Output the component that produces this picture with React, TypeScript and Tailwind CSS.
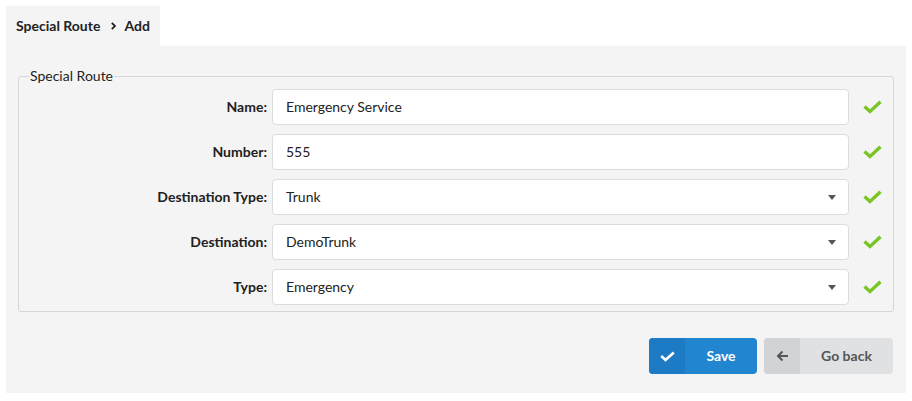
import React from 'react';

type Field = {
  label: string;
  value: string;
  select?: boolean;
};

const fields: Field[] = [
  { label: 'Name:', value: 'Emergency Service' },
  { label: 'Number:', value: '555' },
  { label: 'Destination Type:', value: 'Trunk', select: true },
  { label: 'Destination:', value: 'DemoTrunk', select: true },
  { label: 'Type:', value: 'Emergency', select: true },
];

const Check: React.FC<{ className?: string; color: string }> = ({ className, color }) => (
  <svg className={className} viewBox="0 0 19 14" fill="none">
    <path d="M1.5 6.5 L7 11.5 L17.5 1.8" stroke={color} strokeWidth="3.4" strokeLinecap="butt" strokeLinejoin="miter" />
  </svg>
);

const FormRow: React.FC<{ field: Field }> = ({ field }) => (
  <div className="flex items-center h-9">
    <label className="w-[253px] pr-[5px] text-right font-bold text-[#212121] text-sm">{field.label}</label>
    <div className="relative w-[577px] h-9 bg-white border border-[#dcdcdc] rounded-[4px] flex items-center pl-[13px] text-sm text-[#222]">
      {field.value}
      {field.select && (
        <svg className="absolute right-[12px] top-[15px] w-2 h-[5px]" viewBox="0 0 8 5">
          <path d="M0 0 H8 L4 5 Z" fill="#555" />
        </svg>
      )}
    </div>
    <Check className="ml-[14px] w-[19px] h-[14px]" color="#7ac526" />
  </div>
);

export default function App() {
  return (
    <div className="bg-white min-h-[401px] p-[6px] font-['Lato','Liberation_Sans',sans-serif]">
      <div className="inline-flex items-center h-10 w-[154px] bg-[#f4f4f4] pl-[10px] text-sm font-bold text-[#222]">
        <span>Special Route</span>
        <svg className="ml-[11px] mr-[8px] w-[5px] h-2" viewBox="0 0 5 8">
          <path d="M0.8 0.8 L4 4 L0.8 7.2" stroke="#222" strokeWidth="1.8" fill="none" />
        </svg>
        <span>Add</span>
      </div>
      <div className="bg-[#f4f4f4] w-[900px] h-[347px] pt-5 px-3">
        <fieldset className="border border-[#d6d6d6] rounded-[3px] w-[876px] pb-[6px]">
          <legend className="ml-[10px] px-[1px] text-sm leading-5 text-[#222]">Special Route</legend>
          <div className="flex flex-col gap-[9px] pt-[3px]">
            {fields.map((f) => (
              <FormRow key={f.label} field={f} />
            ))}
          </div>
        </fieldset>
        <div className="flex justify-end gap-[7px] mt-[26px] pr-px">
          <button className="flex h-9 w-[108px] rounded-[4px] bg-[#2185d0] text-white text-sm font-bold overflow-hidden">
            <span className="w-9 h-full bg-[#1c7bc4] flex items-center justify-center">
              <Check className="w-[15px] h-[11px]" color="#ffffff" />
            </span>
            <span className="flex-1 flex items-center justify-center pb-px">Save</span>
          </button>
          <button className="flex h-9 w-[129px] rounded-[4px] bg-[#e0e1e2] text-[#555] text-sm font-bold overflow-hidden">
            <span className="w-9 h-full bg-[#d2d3d4] flex items-center justify-center">
              <svg className="w-[13px] h-3" viewBox="0 0 13 12" fill="none">
                <path d="M12 6 H2 M6.5 1.5 L2 6 L6.5 10.5" stroke="#555" strokeWidth="2" />
              </svg>
            </span>
            <span className="flex-1 flex items-center justify-center pb-px">Go back</span>
          </button>
        </div>
      </div>
    </div>
  );
}
